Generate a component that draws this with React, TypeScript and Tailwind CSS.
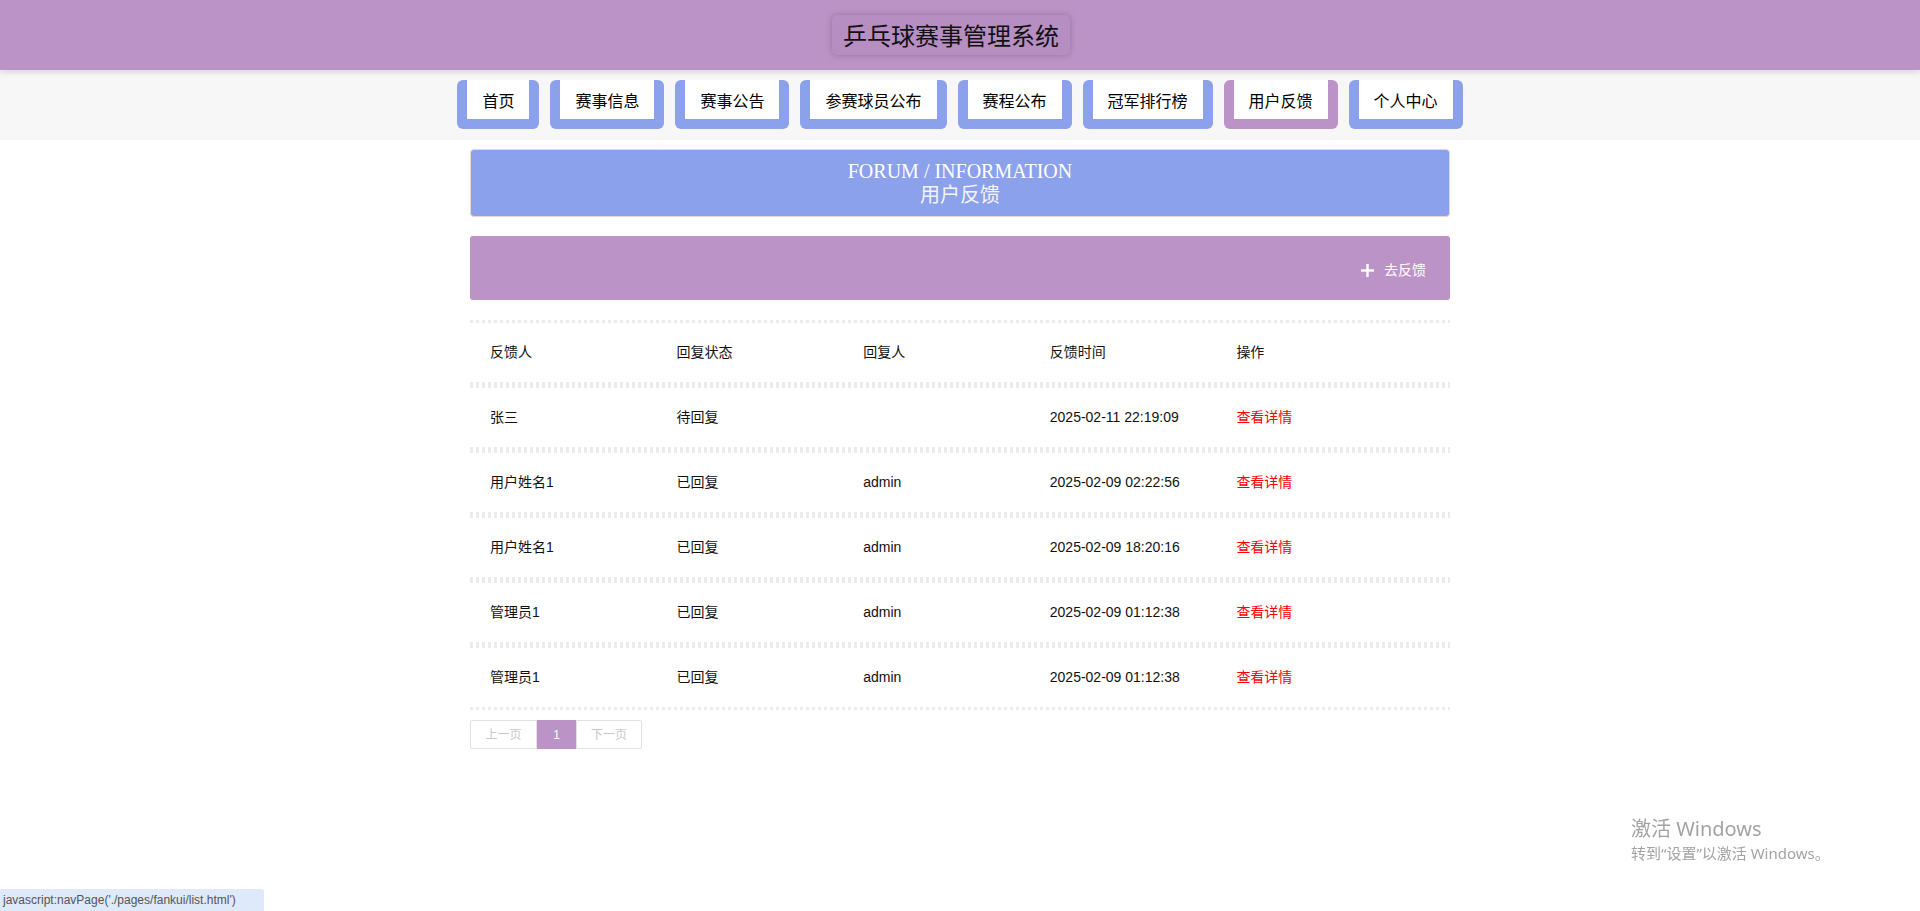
import React from "react";

const tabs = ["首页", "赛事信息", "赛事公告", "参赛球员公布", "赛程公布", "冠军排行榜", "用户反馈", "个人中心"];

const rows = [
  ["张三", "待回复", "", "2025-02-11 22:19:09"],
  ["用户姓名1", "已回复", "admin", "2025-02-09 02:22:56"],
  ["用户姓名1", "已回复", "admin", "2025-02-09 18:20:16"],
  ["管理员1", "已回复", "admin", "2025-02-09 01:12:38"],
  ["管理员1", "已回复", "admin", "2025-02-09 01:12:38"],
];

function DotLine() {
  return (
    <div className="h-[3px] w-full bg-[repeating-linear-gradient(90deg,#ebebeb_0px,#ebebeb_3px,transparent_3px,transparent_6px)]" />
  );
}

function Row({ cells }: { cells: React.ReactNode[] }) {
  return (
    <div>
      <DotLine />
      <div className="grid h-[59px] grid-cols-[186.6px_186.6px_186.6px_186.6px_1fr] items-center text-[14px] text-[#111]">
        {cells.map((c, i) => (
          <div key={i} className="pl-5">
            {c}
          </div>
        ))}
      </div>
      <DotLine />
    </div>
  );
}

export default function App() {
  return (
    <div className="relative min-h-screen bg-white font-['Liberation_Sans','Noto_Sans_CJK_SC',sans-serif]">
      {/* Header */}
      <div className="relative z-10 flex h-[70px] items-center justify-center bg-[#bc93c6] pr-[18px] shadow-[0_2px_6px_rgba(0,0,0,0.15)]">
        <div className="flex h-10 items-center rounded-[5px] bg-[#b78ec1] px-[11px] text-[24px] text-[#111] shadow-[0_0_6px_rgba(0,0,0,0.22)] font-['Noto_Sans_CJK_SC',sans-serif]">
          乒乓球赛事管理系统
        </div>
      </div>

      {/* Nav */}
      <div className="flex h-[70px] justify-center gap-[11px] bg-[#f7f7f7] pt-[10px]">
        {tabs.map((t) => (
          <div
            key={t}
            className={
              "h-[49px] rounded-[6px] px-[10px] pb-[10px] " +
              (t === "用户反馈" ? "bg-[#bc93c6]" : "bg-[#8ca1ec]")
            }
          >
            <div className="flex h-[39px] items-center bg-white px-[15px] text-[16px] text-black font-['Noto_Sans_CJK_SC',sans-serif]">
              {t}
            </div>
          </div>
        ))}
      </div>

      {/* Content */}
      <div className="mx-auto w-[980px] pt-[9px]">
        <div className="flex h-[68px] flex-col items-center justify-center rounded-[4px] border border-[#ead6cf] bg-[#8ca1ec] text-white">
          <div className="text-[20px] leading-[22px] font-['Liberation_Serif',serif]">FORUM / INFORMATION</div>
          <div className="text-[20px] leading-[24px] text-[#f4f4f4] font-['Noto_Sans_CJK_SC',sans-serif]">用户反馈</div>
        </div>

        <div className="mt-[19px] flex h-[64px] items-center justify-end rounded-[3px] bg-[#bc93c6] pr-6 pt-[5px]">
          <div className="flex items-center gap-[10px] text-[14px] text-white">
            <svg width="13" height="13" viewBox="0 0 13 13">
              <rect x="5.3" y="0" width="2.4" height="13" fill="white" />
              <rect x="0" y="5.3" width="13" height="2.4" fill="white" />
            </svg>
            <span>去反馈</span>
          </div>
        </div>

        <div className="mt-[20px]">
          <Row cells={["反馈人", "回复状态", "回复人", "反馈时间", "操作"]} />
          {rows.map((r, i) => (
            <Row
              key={i}
              cells={[r[0], r[1], r[2], r[3], <span className="text-[#ff0000]">查看详情</span>]}
            />
          ))}
        </div>

        <div className="mt-[10px] flex h-[29px] text-[12px]">
          <div className="flex w-[67px] items-center justify-center rounded-l-[2px] border border-[#e2e2e2] text-[#c8c8c8]">
            上一页
          </div>
          <div className="flex w-[39px] items-center justify-center bg-[#bc93c6] text-white">1</div>
          <div className="flex w-[66px] items-center justify-center rounded-r-[2px] border border-[#e2e2e2] text-[#c8c8c8]">
            下一页
          </div>
        </div>
      </div>

      {/* Windows watermark */}
      <div className="pointer-events-none fixed left-[1631px] top-[816px] text-[#a3a3a3] font-['Noto_Sans','Noto_Sans_CJK_SC',sans-serif]">
        <div className="text-[20px] leading-[26px]">激活 Windows</div>
        <div className="mt-[2px] text-[15px] leading-[18px]">转到“设置”以激活 Windows。</div>
      </div>

      {/* Status bar */}
      <div className="fixed bottom-0 left-0 flex h-[22px] w-[264px] items-center rounded-tr-[3px] bg-[#dee9f9] pl-[3px] text-[12px] text-[#555]">
        javascript:navPage('./pages/fankui/list.html')
      </div>
    </div>
  );
}
